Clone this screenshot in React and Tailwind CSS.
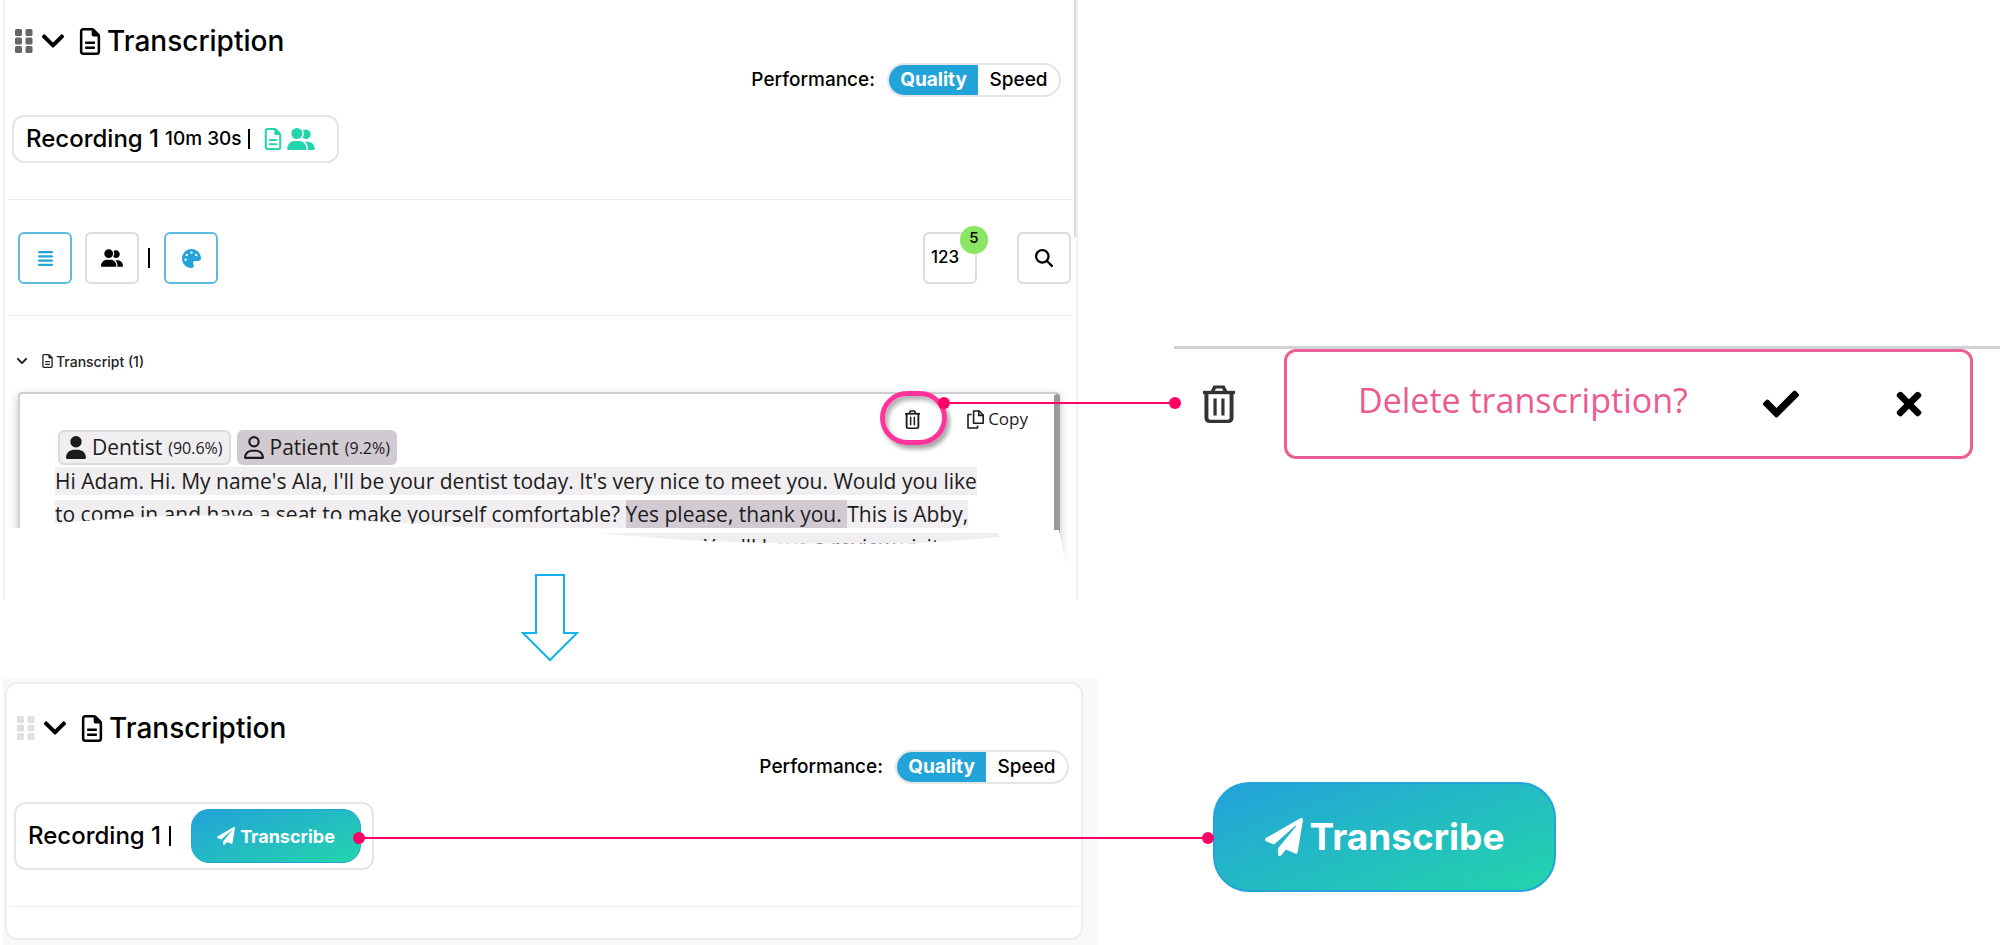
import React from 'react';
import {
  FaAlignJustify,
  FaMagnifyingGlass,
  FaPalette,
  FaRegFileLines,
  FaRegUser,
  FaUser,
  FaUserGroup,
} from 'react-icons/fa6';
import { FaCheck, FaChevronDown, FaPaperPlane, FaTimes } from 'react-icons/fa';

const TrashIcon = ({ className }) => (
  <svg viewBox="0 0 26 38" preserveAspectRatio="none" fill="none" stroke="currentColor" className={className} aria-hidden="true">
    <path d="M0 7.5h26" strokeWidth="3.4" />
    <path d="M7.5 7l2-5h7l2 5" strokeWidth="3" />
    <path d="M2.8 8v25q0 3.4 3 3.4h14.4q3 0 3-3.4V8" strokeWidth="3.2" />
    <path d="M9.8 13.5v17M16.2 13.5v17" strokeWidth="2.6" />
  </svg>
);

const CopyIcon = ({ className }) => (
  <svg viewBox="0 0 17 19" fill="none" stroke="currentColor" strokeWidth="1.6" className={className} aria-hidden="true">
    <path d="M6.6 1h5.6l4 4v8.2h-9.6z" strokeLinejoin="round" />
    <path d="M11.8 1.2v4.2h4.2" />
    <path d="M4.6 4.5H1v13.5h9.5v-2.6" strokeLinejoin="round" />
  </svg>
);

const Grip = ({ className }) => (
  <svg viewBox="0 0 18 24" fill="currentColor" className={className} aria-hidden="true">
    {[0, 8.5, 17].map((y) => (
      <React.Fragment key={y}>
        <rect x="0" y={y} width="7" height="7" rx="1.5" />
        <rect x="10.5" y={y} width="7" height="7" rx="1.5" />
      </React.Fragment>
    ))}
  </svg>
);

const PanelTitle = ({ gripClass }) => (
  <div className="flex h-[34px] items-center pl-[3px]">
    <Grip className={gripClass} />
    <button aria-label="Collapse" className="ml-2">
      <FaChevronDown className="h-[26px] w-[24px]" />
    </button>
    <FaRegFileLines className="ml-[14px] h-[27px] w-[22px]" />
    <h2 className="ml-[6px] text-[28px] font-medium leading-[34px]">Transcription</h2>
  </div>
);

const Performance = () => (
  <div className="mt-[5px] flex h-[34px] items-center justify-end text-[19px] font-medium">
    <span className="mr-3">Performance:</span>
    <div className="flex h-[34px] overflow-hidden rounded-full border-2 border-[#e5e5e5]">
      <button aria-pressed="true" className="w-[89px] bg-[#23a4d8] font-bold text-white">
        Quality
      </button>
      <button aria-pressed="false" className="w-[81px]">
        Speed
      </button>
    </div>
  </div>
);

const ToolButton = ({ label, className, children }) => (
  <button
    aria-label={label}
    className={`flex h-[52px] w-[54px] items-center justify-center rounded-[6px] border-2 bg-white ${className}`}
  >
    {children}
  </button>
);

const Connector = ({ className }) => (
  <div className={`absolute flex h-3 items-center ${className}`}>
    <span className="-mr-1 size-3 rounded-full bg-[#ff0066]"></span>
    <span className="h-[2px] flex-1 bg-[#ff0066]"></span>
    <span className="-ml-1 size-3 rounded-full bg-[#ff0066]"></span>
  </div>
);

const Said = ({ className, children }) => <span className={className}>{children}</span>;

const TranscriptionPanel = () => (
  <section className="relative mr-[19px] h-[600px] overflow-hidden border-x-2 border-[#f1f1f1] pl-[3px]">
    <div className="pl-1 pr-[15px] pt-6">
      <PanelTitle gripClass="h-6 w-[18px] text-[#666]" />
      <Performance />
      <div className="mt-[18px] flex h-12 w-fit items-center rounded-[12px] border-2 border-[#e5e5e5] pl-3 pr-[22px]">
        <span className="text-[24px] font-medium">Recording 1</span>
        <span className="ml-[6px] text-[19px] font-medium">10m 30s</span>
        <span className="ml-[6px] h-[20px] w-[2px] bg-black"></span>
        <FaRegFileLines className="ml-[14px] h-[22px] w-[18px] text-[#23d5ab]" />
        <FaUserGroup className="ml-[5px] h-[22px] w-[28px] text-[#23d5ab]" />
      </div>
    </div>

    <hr className="mr-1 mt-9 border-[#ededed]" />

    {/* Toolbar */}
    <div className="mt-8 flex items-center pl-[10px] pr-[5px]">
      <ToolButton label="Text view" className="border-[#5cbbe2] text-[#23a4d8]">
        <FaAlignJustify className="size-[17px]" />
      </ToolButton>
      <ToolButton label="Speakers" className="ml-[13px] border-[#dcdcdc]">
        <FaUserGroup className="size-[22px]" />
      </ToolButton>
      <span className="ml-[9px] h-[20px] w-[2px] bg-black"></span>
      <ToolButton label="Colours" className="ml-[14px] border-[#5cbbe2] text-[#23a4d8]">
        <FaPalette className="size-[19px]" />
      </ToolButton>
      <div className="relative ml-auto">
        <ToolButton className="border-[#dcdcdc] pr-[10px] text-[17px] font-medium">123</ToolButton>
        <span className="absolute -right-[11px] -top-[6px] flex size-7 items-center justify-center rounded-full bg-[#8ae562] pb-1 text-[15px] font-medium">
          5
        </span>
      </div>
      <ToolButton label="Search" className="ml-10 border-[#dcdcdc]">
        <FaMagnifyingGlass className="size-[18px]" />
      </ToolButton>
    </div>

    <hr className="mr-1 mt-[31px] border-[#ededed]" />

    <div className="mt-[35px] flex h-5 items-center pl-2 text-[#222]">
      <FaChevronDown className="size-3" />
      <FaRegFileLines className="ml-[14px] h-[14px] w-[11px]" />
      <h3 className="ml-[3px] text-[14px] font-medium">Transcript (1)</h3>
    </div>

    {/* Transcript card */}
    <div className="ml-[10px] mr-4 mt-[21px] flex rounded-[4px] border-l-2 border-t-2 border-[#cfcfcf] bg-white font-['Open_Sans',sans-serif] text-[#1c1c1c] shadow-[0_4px_10px_rgba(0,0,0,0.25)]">
      <div className="min-w-0 flex-1 pl-[35px] pt-[14px]">
        <div className="flex h-[22px] items-center justify-end pr-[26px]">
          <button aria-label="Delete transcription" className="relative">
            <TrashIcon className="h-[19px] w-[15px]" />
            <span className="absolute -left-[25px] -top-[19px] h-[54px] w-[67px] rounded-[27px] border-[5px] border-[#ff3399] shadow-[3px_4px_4px_rgba(0,0,0,0.35),inset_3px_4px_4px_rgba(0,0,0,0.3)]"></span>
          </button>
          <button className="ml-[47px] flex items-center gap-1 text-[17px] leading-[22px]">
            <CopyIcon className="h-[19px] w-[17px]" />
            Copy
          </button>
        </div>
        <div className="flex gap-[6px] pl-[3px]">
          <span className="flex h-[35px] items-center rounded-[6px] border-2 border-[#dcdadc] bg-[#f1eef1] px-[6px] text-[21px]">
            <FaUser className="mr-[6px] h-[23px] w-[20px]" />
            Dentist <small className="ml-[6px] text-[16px]">(90.6%)</small>
          </span>
          <span className="flex h-[35px] items-center rounded-[6px] bg-[#d2cad1] px-[7px] text-[21px]">
            <FaRegUser className="mr-[6px] h-[23px] w-[20px]" />
            Patient <small className="ml-[6px] text-[16px]">(9.2%)</small>
          </span>
        </div>
        <p className="whitespace-nowrap text-[21px] leading-[33px]">
          <Said className="bg-[#f1eef1]">
            Hi Adam. Hi. My name's Ala, I'll be your dentist today. It's very nice to meet you. Would you like
          </Said>
          <br />
          <Said className="bg-[#f1eef1]">to come in and have a seat to make yourself comfortable? </Said>
          <Said className="bg-[#d2cad1]">Yes please, thank you. </Said>
          <Said className="bg-[#f1eef1]">This is Abby,</Said>
          <br />
          <Said className="bg-[#f1eef1]">
            she is my nurse and she is here to take some notes for both of us. You'll have a review visit soon.
          </Said>
        </p>
      </div>
      <div className="w-[6px] rounded-t-full bg-[#999]"></div>
    </div>

    {/* Torn lower edge */}
    <svg
      viewBox="0 0 1075 90"
      preserveAspectRatio="none"
      className="absolute bottom-0 left-0 h-[90px] w-full"
      fill="#fff"
      aria-hidden="true"
    >
      <path d="M2 18H18L52 14C160 2 260 4 400 13C460 17 490 20 540 21H572C620 25 660 29 700 31C780 34 880 34 920 33C960 30 1000 28 1015 24L1018 20H1058L1063 45L1072 80V90H12L4 50z" />
    </svg>
    {/* Page scrollbar */}
    <div className="absolute right-0 top-0 h-[237px] w-[2px] bg-[#dadada]"></div>
  </section>
);

const EmptyPanel = () => (
  <section className="bg-[#f8f8f8] pb-[6px] pl-[2px] pr-[14px] pt-1">
    <div className="rounded-[12px] border-2 border-[#eee] bg-white pb-[31px] pl-[2px]">
      <div className="pl-[5px] pr-[12px] pt-[27px]">
        <PanelTitle gripClass="h-6 w-[18px] text-[#e0e0e0]" />
        <Performance />
        <div className="mt-[18px] flex h-[68px] w-fit items-center rounded-[12px] border-2 border-[#e5e5e5] pl-3 pr-[11px]">
          <span className="text-[24px] font-medium">Recording 1</span>
          <span className="ml-2 h-[20px] w-[2px] bg-black"></span>
          <button className="ml-5 flex h-[54px] w-[170px] items-center justify-center gap-[5px] rounded-[18px] border border-[#23a4d8] bg-[linear-gradient(160deg,#23a4d8_5%,#23d5ab)] text-[18px] font-bold text-white">
            <FaPaperPlane className="size-[18px]" />
            Transcribe
          </button>
        </div>
      </div>
      <hr className="mr-[2px] mt-9 border-[#ededed]" />
    </div>
  </section>
);

const DownArrow = () => (
  <svg viewBox="0 0 58 88" className="relative mx-auto h-[88px] w-[58px]" fill="#fff" stroke="#12b3ef" strokeWidth="2" aria-hidden="true">
    <path d="M15 1H43V59H56L29 86L2 59H15z" />
  </svg>
);

export default function App() {
  return (
    <main className="relative grid grid-cols-[55%_1fr] overflow-hidden bg-white font-[Inter,sans-serif] text-black">
      <div className="px-[3px]">
        <TranscriptionPanel />
        <div className="-mt-[26px] mb-4">
          <DownArrow />
        </div>
        <EmptyPanel />
      </div>

      <div className="pl-[74px] pt-[346px]">
        {/* Delete confirmation */}
        <div className="flex items-start border-t-[3px] border-[#d2d2d2]">
          <button aria-label="Delete transcription" className="ml-[29px] mt-9 text-[#333]">
            <TrashIcon className="h-[38px] w-8" />
          </button>
          <div className="ml-[49px] mr-[27px] flex h-[110px] flex-1 items-center rounded-[12px] border-[3px] border-[#ec5f96] pl-[71px] pr-[43px]">
            <span className="pb-2 font-['Open_Sans',sans-serif] text-[34px] text-[#ec5a92]">
              Delete transcription?
            </span>
            <button aria-label="Confirm" className="ml-auto">
              <FaCheck className="size-9" />
            </button>
            <button aria-label="Cancel" className="ml-[92px]">
              <FaTimes className="size-9" />
            </button>
          </div>
        </div>

        <button className="ml-[39px] mt-[323px] flex h-[110px] w-[343px] items-center justify-center gap-[7px] rounded-[36px] border-2 border-[#23a4d8] bg-[linear-gradient(160deg,#23a4d8_5%,#23d5ab)] text-[37px] font-bold text-white">
          <FaPaperPlane className="size-[38px]" />
          Transcribe
        </button>
      </div>

      <Connector className="left-[46.9%] right-[40.95%] top-[397px]" />
      <Connector className="left-[353px] right-[39.3%] top-[832px]" />
    </main>
  );
}
